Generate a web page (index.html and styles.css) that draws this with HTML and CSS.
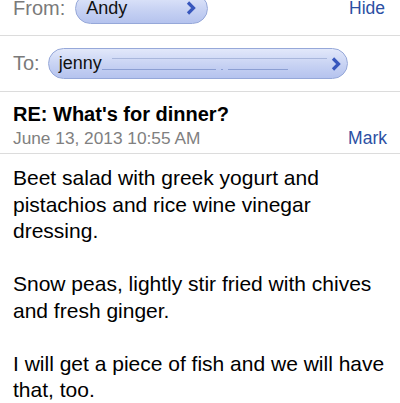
FILE: index.html
```html
<!DOCTYPE html>
<html lang="en">
<head>
  <meta charset="UTF-8" />
  <meta name="viewport" content="width=device-width, initial-scale=1.0"/>
  <title>RE: What's for dinner?</title>
  <link rel="stylesheet" href="styles.css">
</head>
<body>
  <div class="field-row from-row">
    <span class="field-label">From:</span>
    <span class="pill pill-from">
      <span class="pill-name">Andy</span>
      <svg class="chevron" width="10" height="14" viewBox="0 0 10 14"><polyline points="2,1.5 7.5,7 2,12.5" /></svg>
    </span>
    <a class="link hide-link" href="#">Hide</a>
  </div>

  <div class="field-row to-row">
    <span class="field-label">To:</span>
    <span class="pill pill-to">
      <span class="pill-name">jenny</span>
      <span class="scrub">
        <i class="scrub-line scrub-top"></i>
        <span class="scrub-bottom">
          <i class="scrub-line seg-a"></i>
          <i class="scrub-line seg-dot"></i>
          <i class="scrub-line seg-b"></i>
        </span>
      </span>
      <svg class="chevron" width="10" height="14" viewBox="0 0 10 14"><polyline points="2,1.5 7.5,7 2,12.5" /></svg>
    </span>
  </div>

  <div class="subject">
    <h1 class="subject-title">RE: What's for dinner?</h1>
    <div class="subject-meta">
      <span class="date">June 13, 2013 10:55 AM</span>
      <a class="link" href="#">Mark</a>
    </div>
  </div>

  <div class="message">
    <p>Beet salad with greek yogurt and pistachios and rice wine vinegar dressing.</p>
    <p>Snow peas, lightly stir fried with chives and fresh ginger.</p>
    <p>I will get a piece of fish and we will have that, too.</p>
  </div>
</body>
</html>
```

FILE: styles.css
```css
body {
  margin: 0;
  font-family: 'Liberation Sans', Helvetica, Arial, sans-serif;
  background-color: #fff;
  color: #000;
  overflow: hidden;
}

.field-row {
  display: flex;
  align-items: center;
  height: 55px;
  padding: 0 15px 0 13px;
  border-bottom: 1px solid #dcdcdc;
}

.from-row {
  margin-top: -19px;
  height: 54px;
}

.to-row {
  padding-right: 52px;
}

.field-label {
  font-size: 20px;
  color: #7a7a7a;
  margin-right: 8px;
}

.from-row .field-label {
  margin-right: 10px;
}

.pill {
  display: flex;
  align-items: center;
  height: 29px;
  padding: 0 10px 0 10px;
  border: 1px solid #96a8d9;
  border-radius: 16px;
  background: linear-gradient(#e2e8fa, #c7d2f3 55%, #b5c3ee);
  box-sizing: content-box;
}

.pill-from {
  width: 110px;
  padding-right: 11px;
}

.pill-to {
  flex: 1;
  padding-right: 6px;
}

.pill-name {
  font-size: 18px;
  color: #111;
  line-height: 29px;
}

.pill-from .pill-name {
  flex: 1;
}

.chevron {
  flex: none;
}

.chevron polyline {
  fill: none;
  stroke: #3857bd;
  stroke-width: 3.2;
}

.scrub {
  flex: 1;
  display: flex;
  flex-direction: column;
  gap: 10px;
  margin-right: 4px;
}

.scrub-line {
  display: block;
  height: 1px;
}

.scrub-top {
  margin-left: 10px;
  background: #a9b7dc;
}

.scrub-bottom {
  display: flex;
  gap: 5px;
}

.seg-a {
  width: 114px;
  background: #8c9fd3;
}

.seg-dot {
  width: 2px;
  background: #8c9fd3;
}

.seg-b {
  width: 60px;
  background: #8c9fd3;
}

.link {
  font-size: 17px;
  color: #2c4fa3;
  text-decoration: none;
}

.hide-link {
  margin-left: auto;
  font-size: 17.5px;
}

.subject {
  padding: 10px 13px 4px;
  border-bottom: 1px solid #dcdcdc;
}

.subject-title {
  margin: 0;
  font-size: 20px;
  line-height: 24px;
  font-weight: bold;
}

.subject-meta {
  display: flex;
  justify-content: space-between;
  align-items: baseline;
  margin-top: 1px;
  line-height: 22px;
}

.date {
  font-size: 17.3px;
  color: #808080;
}

.subject-meta .link {
  font-size: 17.5px;
}

.message {
  padding: 11px 13px 0;
  font-size: 21px;
  line-height: 26.5px;
}

.message p {
  margin: 0 0 26.5px;
}
```
